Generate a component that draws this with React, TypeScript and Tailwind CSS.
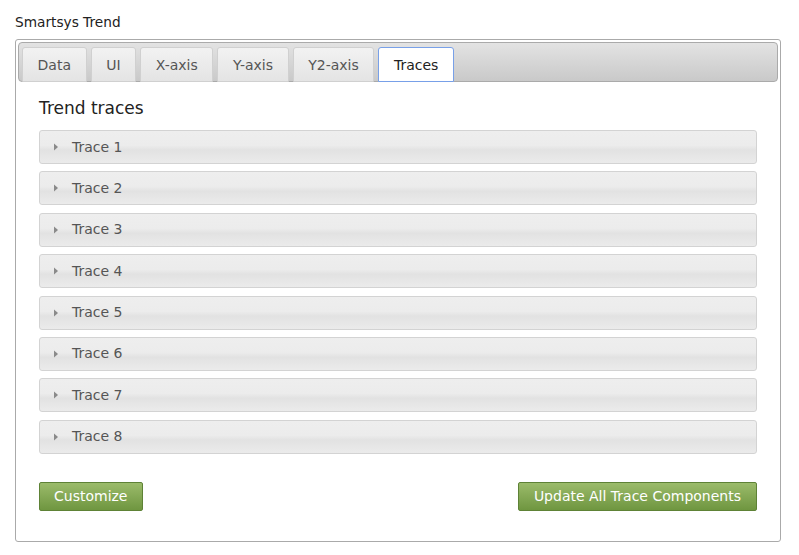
import { useState } from 'react';

const tabs = ['Data', 'UI', 'X-axis', 'Y-axis', 'Y2-axis', 'Traces'];
const traces = ['Trace 1', 'Trace 2', 'Trace 3', 'Trace 4', 'Trace 5', 'Trace 6', 'Trace 7', 'Trace 8'];

export default function App() {
  const [active, setActive] = useState('Traces');

  return (
    <div className="w-[799px] h-[555px] bg-white text-[14px] text-[#333]" style={{ fontFamily: '"DejaVu Sans", Verdana, sans-serif' }}>
      <div className="px-[15px] pt-[11px]">
        <div className="h-[22px] leading-[22px] text-[13.7px] text-[#222]">Smartsys Trend</div>

        {/* Panel */}
        <div className="mt-[6px] w-[766px] h-[503px] border border-[#aaa] rounded-[3px] p-[2px] flex flex-col">
          {/* Tab bar */}
          <div className="h-[40px] border border-[#aaa] rounded-[4px] bg-gradient-to-b from-[#e3e3e3] to-[#c9c9c9] flex items-end gap-[4px] pl-[3px]">
            {tabs.map((t) => (
              <button
                key={t}
                onClick={() => setActive(t)}
                className={`h-[35px] -mb-px pt-[2px] px-[14.6px] rounded-t-[3px] border text-[14px] ${
                  active === t
                    ? 'bg-white border-[#78a0e8] text-[#222]'
                    : 'bg-gradient-to-b from-[#f2f2f2] to-[#e4e4e4] border-[#d0d0d0] text-[#555]'
                }`}
              >
                {t}
              </button>
            ))}
          </div>

          {/* Content */}
          <div className="flex-1 px-[21px] pt-[14px] flex flex-col">
            <h2 className="text-[17px] leading-[24px] text-[#222] mb-[10px]">Trend traces</h2>
            <div className="flex flex-col gap-[7.4px]">
              {traces.map((t) => (
                <div
                  key={t}
                  className="h-[34px] border border-[#d3d3d3] rounded-[3px] bg-[linear-gradient(#eeeeee_0%,#ececec_45%,#e2e2e2_60%,#ebebeb_100%)] flex items-center pl-[13px] text-[#555]"
                >
                  <svg width="6" height="8" viewBox="0 0 6 8" className="mr-[13px]">
                    <path d="M1 0.5 L5 4 L1 7.5 Z" fill="#8a8a8a" />
                  </svg>
                  <span className="text-[14px]">{t}</span>
                </div>
              ))}
            </div>
            <div className="mt-[28px] flex justify-between">
              <button className="h-[29px] px-[14px] rounded-[2px] border border-[#5e8236] bg-gradient-to-b from-[#9bbb6a] to-[#6f9640] text-white text-[14px]">
                Customize
              </button>
              <button className="h-[29px] px-[15px] rounded-[2px] border border-[#5e8236] bg-gradient-to-b from-[#9bbb6a] to-[#6f9640] text-white text-[14px]">
                Update All Trace Components
              </button>
            </div>
          </div>
        </div>
      </div>
    </div>
  );
}
